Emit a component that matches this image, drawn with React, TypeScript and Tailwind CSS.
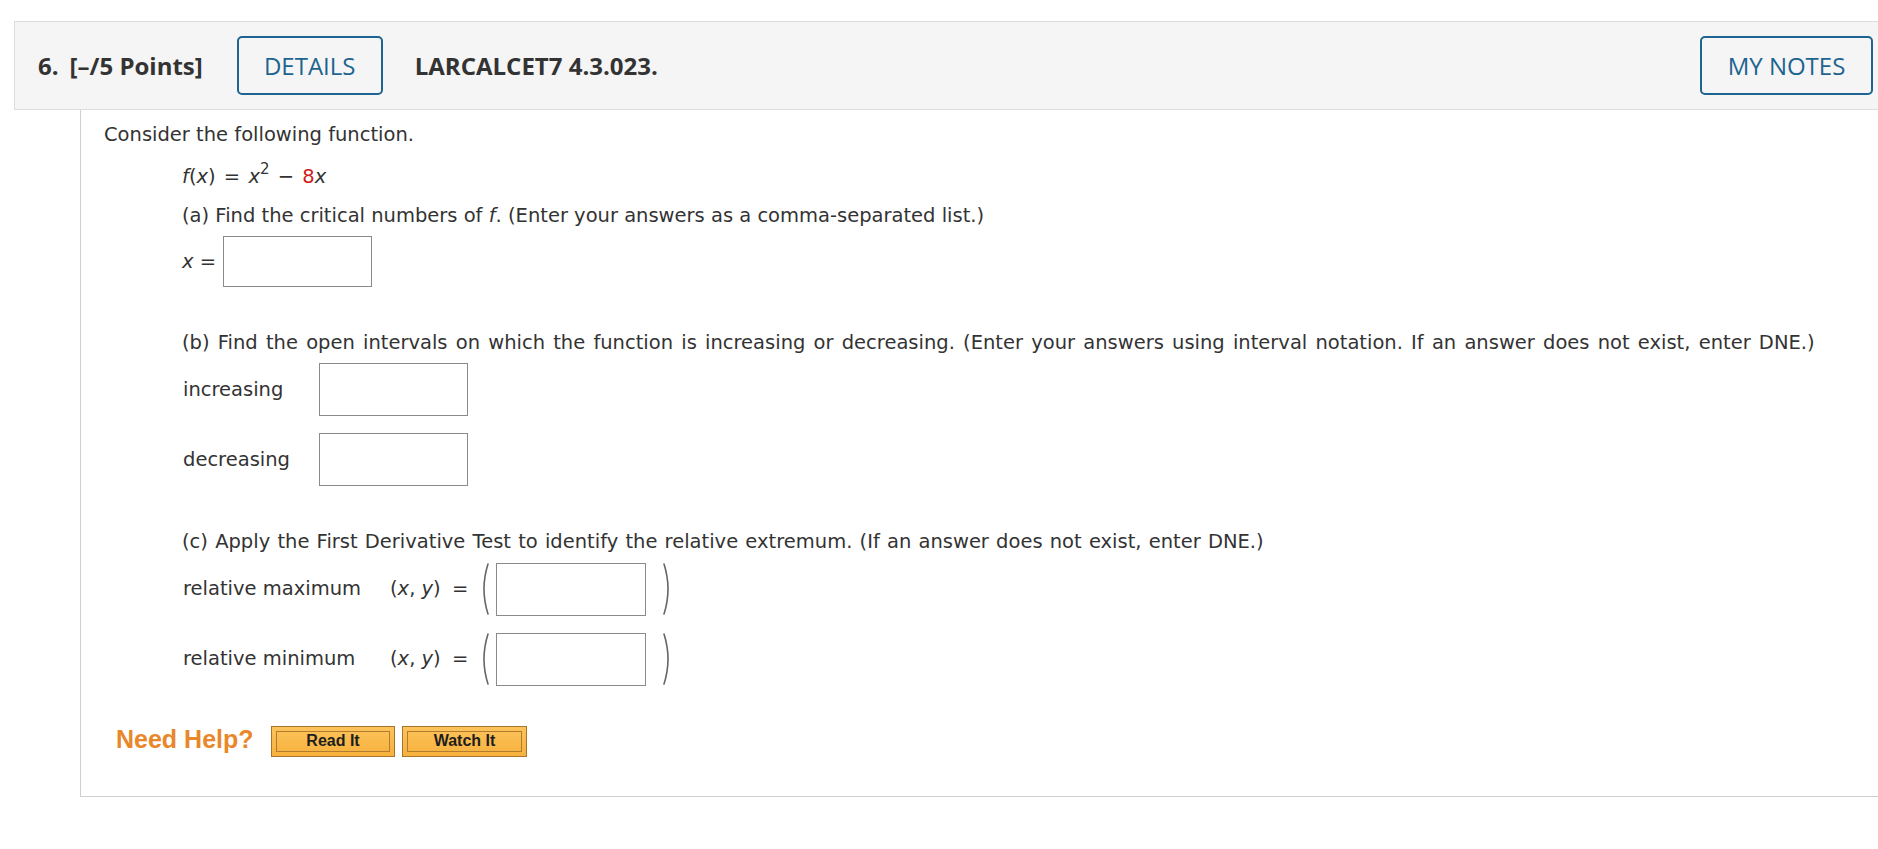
import React from 'react'

const body = { fontFamily: '"DejaVu Sans", Verdana, sans-serif' }
const arial = { fontFamily: '"Liberation Sans", Arial, sans-serif' }

function Box({ w, h }: { w: number; h: number }) {
  return <div className="border border-[#8a8a8a] bg-white shrink-0" style={{ width: w, height: h }} />
}

function Paren({ right }: { right?: boolean }) {
  return (
    <svg width="12" height="56" viewBox="0 0 12 56" className="shrink-0">
      <path
        d={right ? 'M3 3 Q11 28 3 53' : 'M9 3 Q1 28 9 53'}
        fill="none"
        stroke="#666"
        strokeWidth="1.6"
        strokeLinecap="round"
      />
    </svg>
  )
}

function HelpButton({ label, w }: { label: string; w: number }) {
  return (
    <div
      className="h-[31px] border border-[#a8742c] bg-gradient-to-b from-[#fcc35a] to-[#f7b13c] p-[4px] shrink-0"
      style={{ width: w }}
    >
      <div
        className="h-full border border-[#b27c30] flex items-center justify-center text-[16px] font-bold text-[#1e1e1e]"
        style={arial}
      >
        {label}
      </div>
    </div>
  )
}

function Point({ label }: { label: string }) {
  return (
    <div className="flex items-center h-[56px]">
      <span className="w-[207px] shrink-0">{label}</span>
      <span className="w-[62px] shrink-0">
        (<i>x</i>, <i>y</i>)
      </span>
      <span className="w-[27px] shrink-0">=</span>
      <Paren />
      <div className="ml-[5px]">
        <Box w={150} h={53} />
      </div>
      <div className="ml-[15px]">
        <Paren right />
      </div>
    </div>
  )
}

export default function App() {
  return (
    <div className="w-[1878px] h-[849px] overflow-hidden bg-white pt-[21px]">
      {/* Cabecera de la pregunta */}
      <header
        className="ml-[14px] w-[1869px] h-[89px] bg-[#f5f5f5] border border-[#dcdcdc] flex items-center pl-[23px]"
        style={{ fontFamily: '"Open Sans", sans-serif' }}
      >
        <span className="text-[24px] font-bold text-[#333]">6.</span>
        <span className="ml-[11px] text-[24px] font-bold text-[#333]">[–/5 Points]</span>
        <div className="ml-[34px] w-[146px] h-[59px] border-2 border-[#1d6490] rounded-[5px] flex items-center justify-center text-[24px] text-[#1d6490]">
          DETAILS
        </div>
        <span className="ml-[32px] text-[24px] font-bold text-[#333]">LARCALCET7 4.3.023.</span>
        <div className="flex-1" />
        <div className="mr-[9px] w-[173px] h-[59px] border-2 border-[#1d6490] rounded-[5px] flex items-center justify-center text-[24px] text-[#1d6490]">
          MY NOTES
        </div>
      </header>

      {/* Cuerpo */}
      <div
        className="ml-[80px] w-[1810px] border-l border-b border-[#cfcfcf] pl-[23px] pt-[13px] pb-[37px] text-[19.5px] text-[#333]"
        style={body}
      >
        <p className="leading-[24px]">Consider the following function.</p>

        <p className="ml-[78px] mt-[18px] leading-[24px]">
          <i>f</i>(<i>x</i>) <span className="mx-[2px]">=</span> <i>x</i>
          <sup className="text-[15px] -top-[9px]">2</sup> <span className="mx-[2px]">−</span>{' '}
          <span className="text-[#d0201a]">8</span>
          <i>x</i>
        </p>

        <p className="ml-[78px] mt-[15px] leading-[24px]">
          (a) Find the critical numbers of <i>f</i>. (Enter your answers as a comma-separated list.)
        </p>
        <div className="ml-[78px] mt-[8px] flex items-center">
          <span className="w-[41px]">
            <i>x</i> =
          </span>
          <Box w={149} h={51} />
        </div>

        <p className="ml-[78px] mt-[44px] leading-[24px] [word-spacing:2px]">
          (b) Find the open intervals on which the function is increasing or decreasing. (Enter your answers using
          interval notation. If an answer does not exist, enter DNE.)
        </p>
        <div className="ml-[79px] mt-[8px] flex items-center">
          <span className="w-[136px]">increasing</span>
          <Box w={149} h={53} />
        </div>
        <div className="ml-[79px] mt-[17px] flex items-center">
          <span className="w-[136px]">decreasing</span>
          <Box w={149} h={53} />
        </div>

        <p className="ml-[78px] mt-[44px] leading-[24px] [word-spacing:1px]">
          (c) Apply the First Derivative Test to identify the relative extremum. (If an answer does not exist, enter
          DNE.)
        </p>
        <div className="ml-[79px] mt-[7px]">
          <Point label="relative maximum" />
        </div>
        <div className="ml-[79px] mt-[14px]">
          <Point label="relative minimum" />
        </div>

        <div className="ml-[12px] mt-[37px] flex items-center">
          <span className="w-[155px] text-[25px] font-bold text-[#e9872b] -mt-[3px]" style={arial}>
            Need Help?
          </span>
          <HelpButton label="Read It" w={124} />
          <div className="ml-[7px]">
            <HelpButton label="Watch It" w={125} />
          </div>
        </div>
      </div>
    </div>
  )
}
